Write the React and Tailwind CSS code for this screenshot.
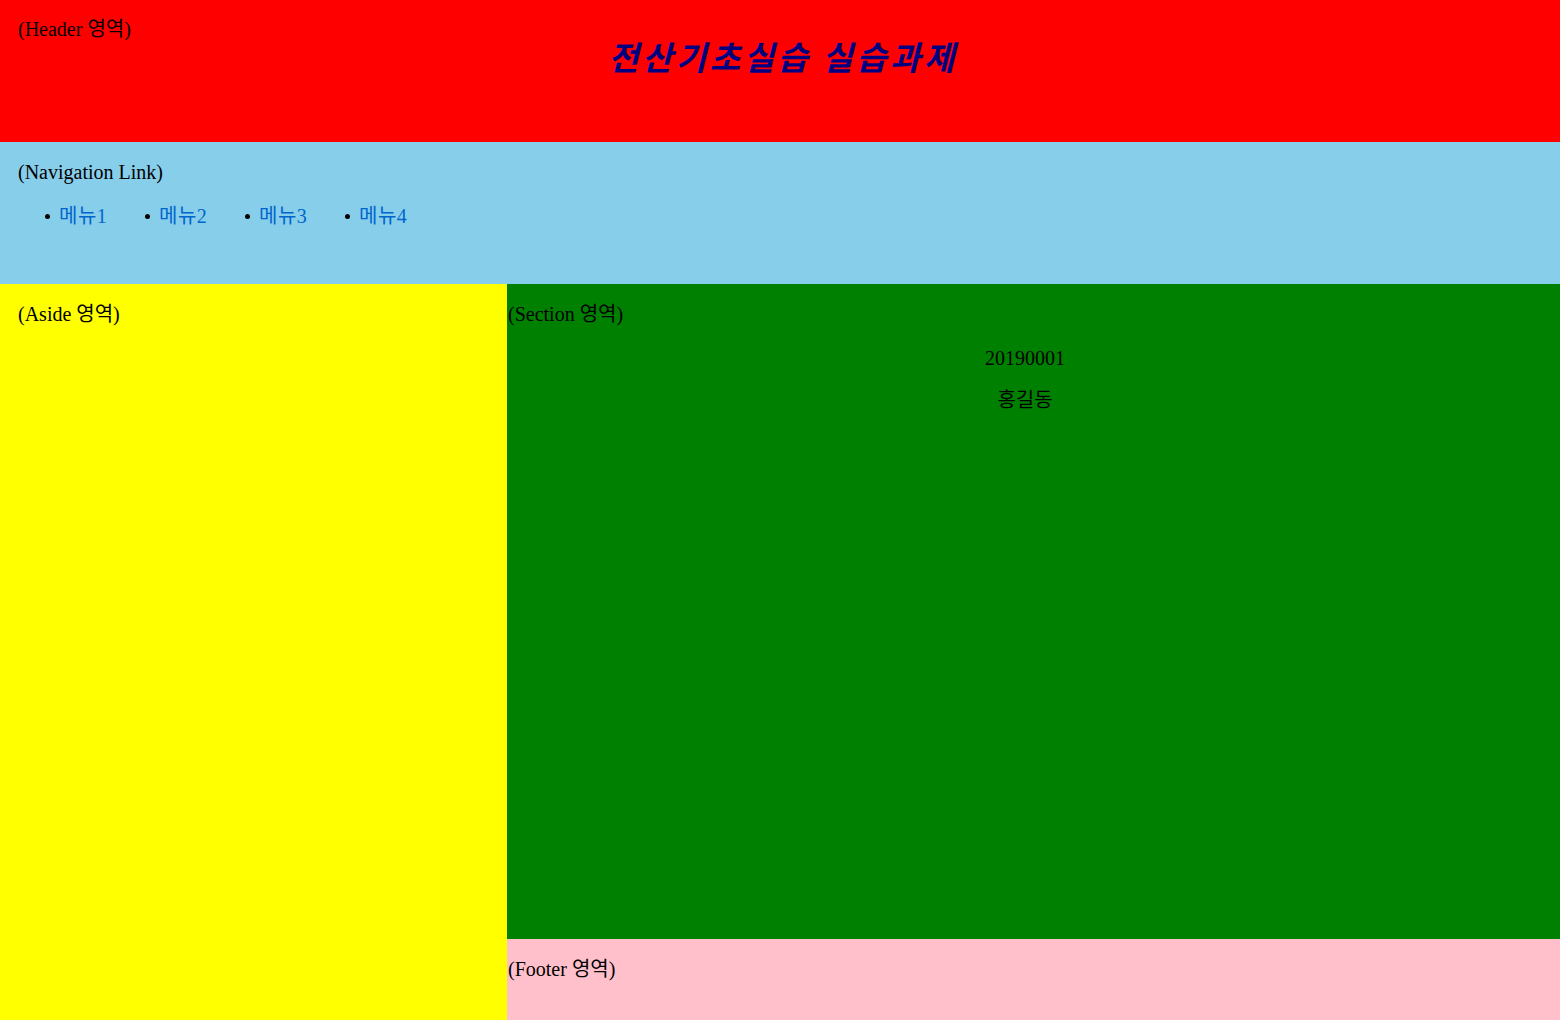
export default function App() {
  return (
    <div className="w-[1560px] h-[1020px] flex flex-col text-black text-[20px] leading-[22px] font-['Liberation_Serif','Noto_Sans_CJK_KR',serif]">
      <header className="h-[142px] shrink-0 bg-[#ff0000] pl-[18px] pt-[18px] flex flex-col">
        <div>(Header 영역)</div>
        <h1 className="-mt-[2px] pr-[12px] text-center text-[33px] leading-[36px] tracking-[3.5px] font-bold italic text-[#000080] font-['Noto_Sans_CJK_KR',sans-serif]">전산기초실습 실습과제</h1>
      </header>
      <nav className="h-[142px] shrink-0 bg-[#87ceeb] pl-[18px] pt-[19px]">
        <div>(Navigation Link)</div>
        <ul className="flex mt-[22px] pl-[26px]">
          {["메뉴1", "메뉴2", "메뉴3", "메뉴4"].map((m) => (
            <li key={m} className="w-[100px] flex items-center">
              <span className="w-[15px] inline-flex items-center pl-[1px]"><span className="w-[5px] h-[5px] rounded-full bg-black inline-block"></span></span>
              <a className="text-[#0066cc] tracking-[0.5px]">{m}</a>
            </li>
          ))}
        </ul>
      </nav>
      <div className="flex flex-1 min-h-0">
        <aside className="w-[507px] bg-[#ffff00] pl-[18px] pt-[19px]">(Aside 영역)</aside>
        <div className="flex-1 flex flex-col">
          <section className="h-[655px] shrink-0 bg-[#008000] pt-[19px] pl-[1px] pr-[18px]">
            <div>(Section 영역)</div>
            <div className="text-center mt-[22px]">20190001</div>
            <div className="text-center mt-[20px]">홍길동</div>
          </section>
          <footer className="flex-1 bg-[#ffc0cb] pl-[1px] pt-[19px]">(Footer 영역)</footer>
        </div>
      </div>
    </div>
  );
}
